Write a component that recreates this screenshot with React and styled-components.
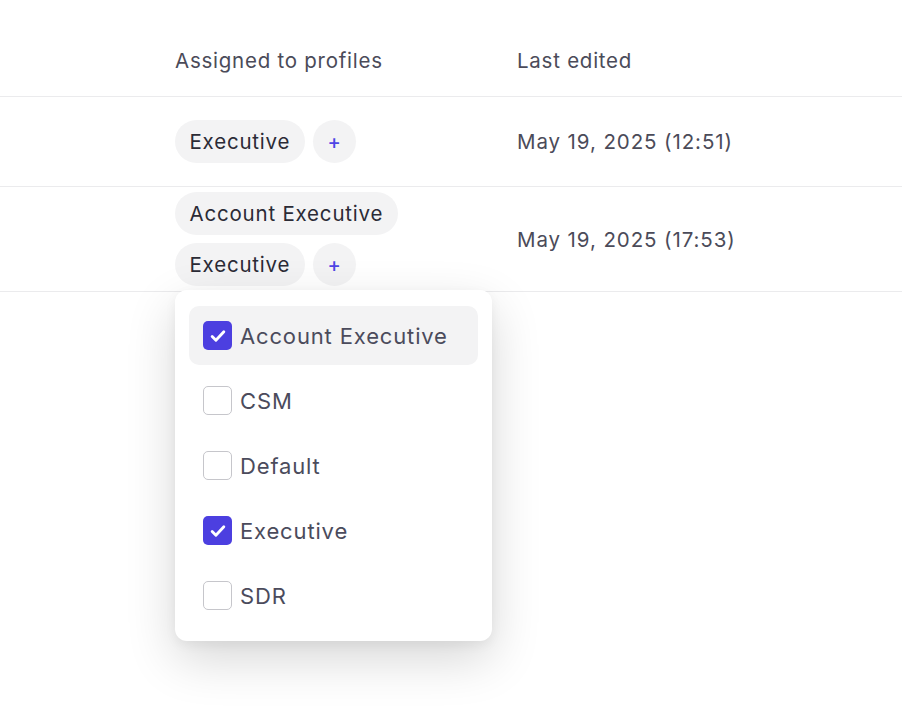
import React from "react";
import styled, { createGlobalStyle } from "styled-components";

const GlobalStyle = createGlobalStyle`
  html, body {
    margin: 0;
    padding: 0;
    background: #fff;
    font-family: Inter, "Noto Sans", sans-serif;
  }
`;

const rows = [
  { profiles: ["Executive"], edited: "May 19, 2025 (12:51)" },
  { profiles: ["Account Executive", "Executive"], edited: "May 19, 2025 (17:53)" },
];

const options = [
  { label: "Account Executive", checked: true, active: true },
  { label: "CSM", checked: false },
  { label: "Default", checked: false },
  { label: "Executive", checked: true },
  { label: "SDR", checked: false },
];

const Page = () => {
  return (
    <Wrapper>
      <GlobalStyle />
      <HeaderRow>
        <Cell />
        <HeaderCell>Assigned to profiles</HeaderCell>
        <HeaderCell>Last edited</HeaderCell>
      </HeaderRow>
      {rows.map((row, i) => (
        <Row key={i}>
          <Cell />
          <ChipList>
            {row.profiles.map((p) => (
              <Chip key={p}>{p}</Chip>
            ))}
            <AddChip>+</AddChip>
          </ChipList>
          <DateCell>{row.edited}</DateCell>
        </Row>
      ))}

      <Menu>
        {options.map((opt) => (
          <MenuItem key={opt.label} $active={opt.active}>
            <Box $checked={opt.checked}>
              {opt.checked && (
                <svg width="20" height="20" viewBox="0 0 24 24" fill="none">
                  <path
                    d="M5 12.5l4.5 4.5L19 7"
                    stroke="#fff"
                    strokeWidth="3.4"
                    strokeLinecap="round"
                    strokeLinejoin="round"
                  />
                </svg>
              )}
            </Box>
            <span>{opt.label}</span>
          </MenuItem>
        ))}
      </Menu>
    </Wrapper>
  );
};

const Wrapper = styled.div`
  position: relative;
  width: 902px;
  height: 720px;
  overflow: hidden;
`;

const HeaderRow = styled.div`
  display: grid;
  grid-template-columns: 175px 342px 1fr;
  height: 96px;
  align-items: end;
  border-bottom: 1px solid #ebebed;
  box-sizing: content-box;
`;

const Cell = styled.div``;

const HeaderCell = styled.div`
  font-size: 20.5px;
  line-height: 24px;
  padding-bottom: 23px;
  color: #4b4b59;
  letter-spacing: 0.75px;
`;

const Row = styled.div`
  display: grid;
  grid-template-columns: 175px 342px 1fr;
  align-items: center;
  min-height: 79px;
  padding: 5px 0;
  border-bottom: 1px solid #ebebed;
  box-sizing: content-box;
`;

const ChipList = styled.div`
  display: flex;
  flex-wrap: wrap;
  gap: 8px;
  max-width: 320px;
`;

const Chip = styled.div`
  height: 43px;
  padding: 0 14.5px;
  border-radius: 22px;
  background: #f3f3f4;
  color: #2b2b36;
  font-size: 20.5px;
  letter-spacing: 0.8px;
  display: flex;
  align-items: center;
  white-space: nowrap;
`;

const AddChip = styled.div`
  width: 43px;
  height: 43px;
  border-radius: 50%;
  background: #f3f3f4;
  color: #4f46e5;
  font-size: 20px;
  font-weight: 500;
  display: flex;
  align-items: center;
  justify-content: center;
`;

const DateCell = styled.div`
  font-size: 20.5px;
  color: #4b4b59;
  letter-spacing: 0.9px;
`;

const Menu = styled.div`
  position: absolute;
  left: 175px;
  top: 290px;
  width: 317px;
  padding: 16px 14px;
  box-sizing: border-box;
  background: #fff;
  border-radius: 12px;
  box-shadow: 0 18px 50px rgba(0, 0, 0, 0.16), 0 4px 12px rgba(0, 0, 0, 0.05);
  display: flex;
  flex-direction: column;
  gap: 6px;
`;

const MenuItem = styled.div`
  height: 59px;
  display: flex;
  align-items: center;
  gap: 8px;
  padding: 0 14px;
  border-radius: 10px;
  background: ${({ $active }) => ($active ? "#f3f3f4" : "transparent")};
  color: #4b4b5c;
  font-size: 22px;
  letter-spacing: 0.85px;
`;

const Box = styled.div`
  width: 29px;
  height: 29px;
  box-sizing: border-box;
  border-radius: 5px;
  display: flex;
  align-items: center;
  justify-content: center;
  background: ${({ $checked }) => ($checked ? "#4c3fe0" : "#fff")};
  border: ${({ $checked }) => ($checked ? "none" : "1.5px solid #c6c6cb")};
`;

export default Page;
